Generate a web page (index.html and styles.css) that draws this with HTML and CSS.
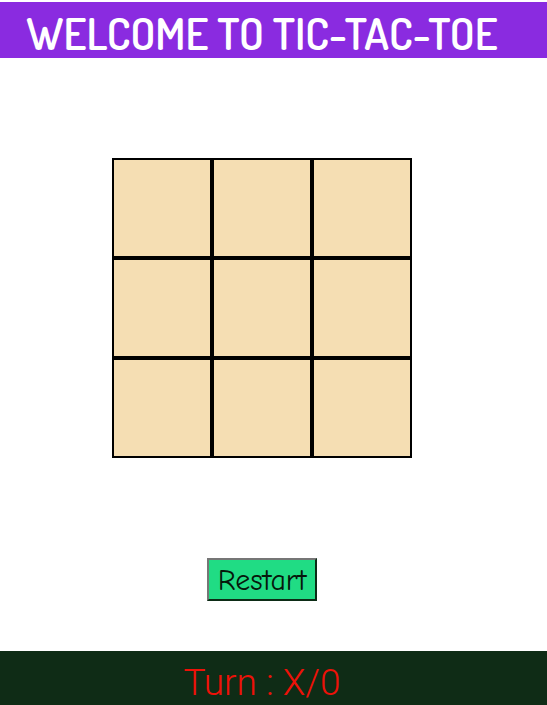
FILE: index.html
```
<!DOCTYPE html>
<html lang="en">
<head>
<meta charset="utf-8">
<meta name="viewport" content="width=device-width, initial-scale=1">
<title>Tic-Tac-Toe</title>
<link rel="stylesheet" href="styles.css">
</head>
<body>
<header class="banner"><h1 class="title">WELCOME TO TIC-TAC-TOE</h1></header>
<main class="game">
<div class="board">
<button class="cell" type="button" aria-label="Row 1, column 1"></button>
<button class="cell" type="button" aria-label="Row 1, column 2"></button>
<button class="cell" type="button" aria-label="Row 1, column 3"></button>
<button class="cell" type="button" aria-label="Row 2, column 1"></button>
<button class="cell" type="button" aria-label="Row 2, column 2"></button>
<button class="cell" type="button" aria-label="Row 2, column 3"></button>
<button class="cell" type="button" aria-label="Row 3, column 1"></button>
<button class="cell" type="button" aria-label="Row 3, column 2"></button>
<button class="cell" type="button" aria-label="Row 3, column 3"></button>
</div>
<button class="restart" type="button">Restart</button>
</main>
<footer class="turn">Turn : X/0</footer>
</body>
</html>
```
FILE: styles.css
```
* {
  box-sizing: border-box;
}

body {
  margin: 0;
  padding-top: 2px;
  background: #fff;
}

.banner,
.game,
.turn {
  padding-right: 23px;
  text-align: center;
}

.banner {
  background: #8a2be0;
  color: #fff;
}

.title {
  margin: 0;
  padding-top: 6px;
  font: 600 44px/50px Dosis, Roboto, sans-serif;
  white-space: nowrap;
}

.game {
  display: flex;
  flex-direction: column;
  align-items: center;
  gap: 100px;
  padding-top: 100px;
  padding-bottom: 50px;
}

.board {
  display: grid;
  grid-template-columns: repeat(3, 100px);
  grid-auto-rows: 100px;
}

.cell {
  padding: 0;
  border: 2px solid #000;
  border-radius: 0;
  background: #f5deb3;
}

.restart {
  padding: 3px 9px 1px;
  border: 2px solid;
  border-color: #767676 #0c2c16 #0c2c16 #767676;
  border-radius: 0;
  background: #20dc84;
  color: #06180c;
  font: 30px/35px "Comic Sans MS", "Comic Neue", Lato, sans-serif;
}

.turn {
  padding-top: 10px;
  background: #0f2c16;
  color: #ee1108;
  font: 300 37px/44px Roboto, sans-serif;
}
```
